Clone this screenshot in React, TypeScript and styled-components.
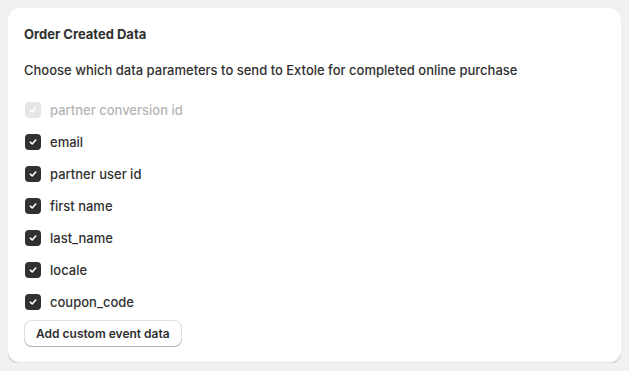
import React from "react";
import styled, { createGlobalStyle } from "styled-components";

const Global = createGlobalStyle`
  html, body { background: #f1f1f1; }
  body {
    margin: 8px;
    font-family: Inter, "Noto Sans", "Liberation Sans", sans-serif;
    color: #303030;
    -webkit-font-smoothing: antialiased;
  }
  * { box-sizing: border-box; }
`;

const Card = styled.section`
  background: #ffffff;
  border-radius: 12px;
  height: 355px;
  padding: 16px;
  box-shadow: 0 1px 0 0 rgba(26, 26, 26, 0.07), 0 1px 2px 0 rgba(0, 0, 0, 0.12),
    inset 0 -1px 0 0 rgba(0, 0, 0, 0.1);
  display: flex;
  flex-direction: column;
`;

const Title = styled.h2`
  margin: 0;
  font-size: 13px;
  line-height: 20px;
  font-weight: 650;
  color: #303030;
`;

const Description = styled.p`
  margin: 16px 0 0;
  font-size: 13px;
  line-height: 20px;
  font-weight: 450;
  color: #303030;
`;

const ChoiceList = styled.ul`
  list-style: none;
  margin: 16px 0 0;
  padding: 0;
  display: flex;
  flex-direction: column;
  gap: 4px;
`;

const Choice = styled.li`
  display: flex;
  align-items: center;
  height: 28px;
  padding-left: 1px;
`;

const Box = styled.span<{ $disabled?: boolean }>`
  width: 16px;
  height: 16px;
  border-radius: 4px;
  background: ${(p) => (p.$disabled ? "#e6e6e6" : "#303030")};
  display: inline-flex;
  align-items: center;
  justify-content: center;
  flex: none;
`;

const Label = styled.span<{ $disabled?: boolean }>`
  margin-left: 9px;
  font-size: 13px;
  line-height: 20px;
  font-weight: 450;
  color: ${(p) => (p.$disabled ? "#b5b5b5" : "#303030")};
`;

const Button = styled.button`
  margin-top: 4px;
  align-self: flex-start;
  height: 28px;
  padding: 0 12px;
  border: none;
  border-radius: 8px;
  background: #ffffff;
  font-family: inherit;
  font-size: 12px;
  font-weight: 600;
  color: #303030;
  box-shadow: inset 0 -1px 0 0 #b5b5b5, inset 0 0 0 1px rgba(0, 0, 0, 0.12);
  cursor: pointer;
`;

const Check = () => (
  <svg width="10" height="10" viewBox="0 0 10 10" fill="none">
    <path
      d="M2.3 5.2 L4.2 7 L7.7 3"
      stroke="#ffffff"
      strokeWidth="1.6"
      strokeLinecap="round"
      strokeLinejoin="round"
    />
  </svg>
);

const items = [
  { label: "partner conversion id", disabled: true },
  { label: "email" },
  { label: "partner user id" },
  { label: "first name" },
  { label: "last_name" },
  { label: "locale" },
  { label: "coupon_code" },
];

export default function App() {
  return (
    <>
      <Global />
      <Card>
        <Title>Order Created Data</Title>
        <Description>
          Choose which data parameters to send to Extole for completed online purchase
        </Description>
        <ChoiceList>
          {items.map((it) => (
            <Choice key={it.label}>
              <Box $disabled={it.disabled}>
                <Check />
              </Box>
              <Label $disabled={it.disabled}>{it.label}</Label>
            </Choice>
          ))}
        </ChoiceList>
        <Button>Add custom event data</Button>
      </Card>
    </>
  );
}
